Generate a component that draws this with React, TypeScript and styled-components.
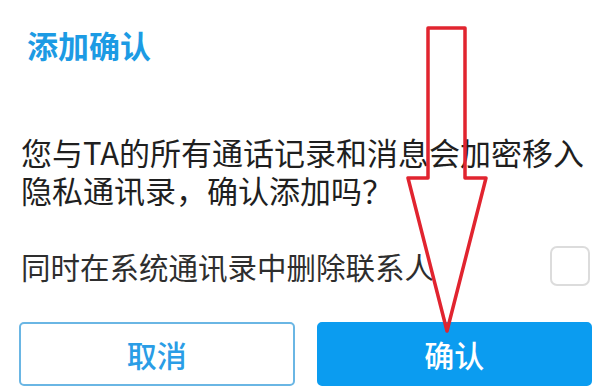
import React, { useState } from "react";
import styled, { createGlobalStyle } from "styled-components";

const GlobalStyle = createGlobalStyle`
  html, body {
    margin: 0;
    padding: 0;
    background: #ffffff;
  }
  body {
    font-family: "Noto Sans CJK SC", "Noto Sans", sans-serif;
  }
`;

function App() {
  const [removeContact, setRemoveContact] = useState(false);

  return (
    <>
      <GlobalStyle />
      <Dialog>
        <Title>添加确认</Title>
        <Message>您与TA的所有通话记录和消息会加密移入隐私通讯录，确认添加吗？</Message>
        <OptionRow>
          <OptionLabel>同时在系统通讯录中删除联系人</OptionLabel>
          <CheckBox
            checked={removeContact}
            onClick={() => setRemoveContact(!removeContact)}
          />
        </OptionRow>
        <Actions>
          <ActionButton>取消</ActionButton>
          <ActionButton primary>确认</ActionButton>
        </Actions>
        <Arrow viewBox="0 0 600 387">
          <polygon points="428,28 465,28 465,178 486,178 447,331 408,178 428,178" />
        </Arrow>
      </Dialog>
    </>
  );
}

const Dialog = styled.div`
  position: relative;
  width: 600px;
  height: 387px;
  box-sizing: border-box;
  padding: 25px 8px 0 19px;
  display: flex;
  flex-direction: column;
  overflow: hidden;
  background: #fff;
`;

const Title = styled.h2`
  margin: 0 0 0 8px;
  font-size: 31px;
  line-height: 40px;
  font-weight: 700;
  color: #1c9be4;
`;

const Message = styled.p`
  margin: 68px 0 0 2px;
  font-size: 31px;
  line-height: 38px;
  color: #1f1f1f;
`;

const OptionRow = styled.div`
  margin-top: 37px;
  display: flex;
  align-items: center;
  justify-content: space-between;
  padding-left: 2px;
  padding-right: 2px;
`;

const OptionLabel = styled.span`
  font-size: 29.5px;
  line-height: 40px;
  color: #2e2e2e;
`;

const CheckBox = styled.div<{ checked: boolean }>`
  width: 36px;
  height: 36px;
  border: 2px solid #dcdcdc;
  border-radius: 7px;
  background: ${(p) => (p.checked ? "#1c9be4" : "#fff")};
  cursor: pointer;
`;

const Actions = styled.div`
  margin-top: auto;
  margin-bottom: 1px;
  display: grid;
  grid-template-columns: 1fr 1fr;
  gap: 22px;
`;

const ActionButton = styled.button<{ primary?: boolean }>`
  height: 64px;
  box-sizing: border-box;
  border-radius: 5px;
  border: 2px solid ${(p) => (p.primary ? "#0b9cf0" : "#6ab6e4")};
  background: ${(p) => (p.primary ? "#0b9cf0" : "#fff")};
  color: ${(p) => (p.primary ? "#fff" : "#2a9de6")};
  font-family: "Noto Sans CJK SC", sans-serif;
  font-size: 30px;
  font-weight: 500;
  padding: 0;
`;

const Arrow = styled.svg`
  position: absolute;
  left: 0;
  top: 0;
  width: 600px;
  height: 387px;
  pointer-events: none;

  polygon {
    fill: none;
    stroke: #e1242f;
    stroke-width: 3.5;
    stroke-linejoin: round;
  }
`;

export default App;
